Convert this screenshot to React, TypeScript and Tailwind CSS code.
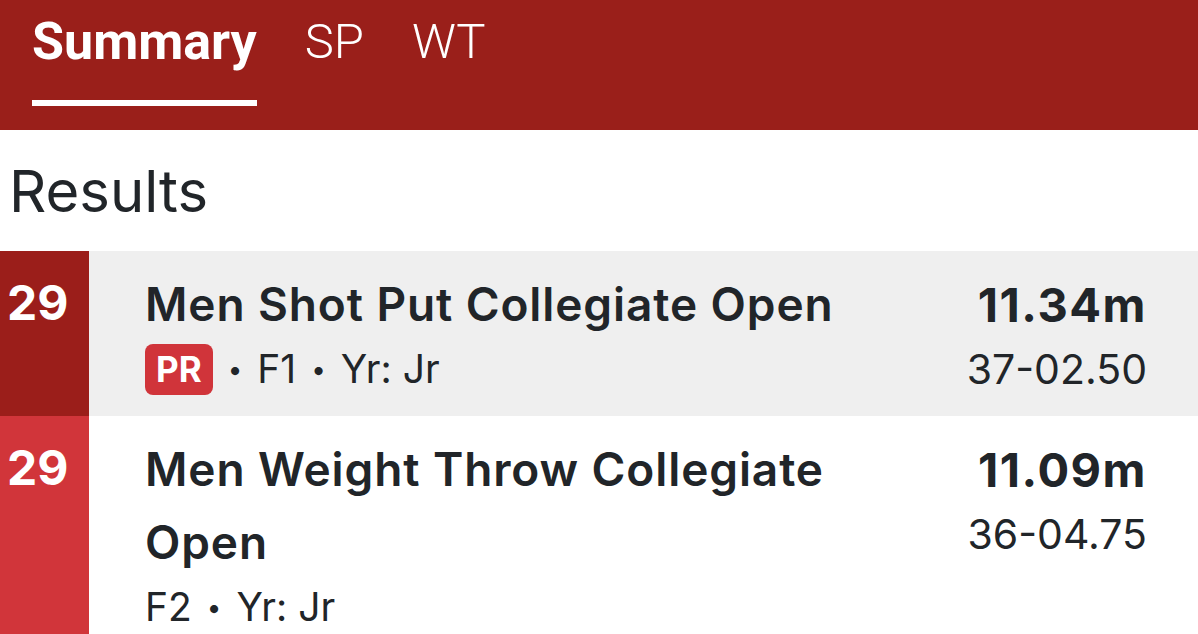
import React from 'react';

type Result = {
  place: number;
  event: string;
  pr?: boolean;
  flight: string;
  year: string;
  metric: string;
  imperial: string;
  rankBg: string;
  rowBg: string;
};

const results: Result[] = [
  {
    place: 29,
    event: 'Men Shot Put Collegiate Open',
    pr: true,
    flight: 'F1',
    year: 'Jr',
    metric: '11.34m',
    imperial: '37-02.50',
    rankBg: 'bg-[#9b1e1a]',
    rowBg: 'bg-[#efefef]',
  },
  {
    place: 29,
    event: 'Men Weight Throw Collegiate Open',
    flight: 'F2',
    year: 'Jr',
    metric: '11.09m',
    imperial: '36-04.75',
    rankBg: 'bg-[#d1353a]',
    rowBg: 'bg-white',
  },
];

const tabs = ['Summary', 'SP', 'WT'];

const Dot: React.FC = () => <span className="mx-[15px] text-[26px]">•</span>;

const App: React.FC = () => {
  return (
    <div className="h-[634px] w-[1198px] overflow-hidden bg-white font-['Inter',sans-serif] text-[#212529]">
      {/* 상단 탭 */}
      <div className="flex h-[130px] items-start gap-[48px] bg-[#9a1f1a] pl-[32px] font-['Roboto',sans-serif] text-white">
        {tabs.map((tab, i) => (
          <div key={tab} className="flex flex-col">
            <span
              className={`pt-[11px] leading-[62px] ${i === 0 ? 'text-[52px] font-bold' : 'text-[49px] font-light'}`}
            >
              {tab}
            </span>
            {i === 0 && <div className="mt-[27px] h-[6px] w-full bg-white" />}
          </div>
        ))}
      </div>

      <h2 className="px-[9px] pt-[26px] pb-[24px] text-[58px] leading-[71px] font-normal">Results</h2>

      {results.map((r, idx) => (
        <div key={idx} className={`flex ${r.rowBg} ${idx === results.length - 1 ? 'min-h-[300px]' : ''}`}>
          <div className={`w-[89px] shrink-0 ${r.rankBg} pt-[16px] pl-[7px] text-[48px] leading-[72px] font-bold text-white`}>
            {r.place}
          </div>
          <div className="flex flex-1 justify-between pt-[17px] pr-[51px] pb-[18px] pl-[56px]">
            <div className="max-w-[700px]">
              <div className="text-[46px] leading-[73px] font-semibold tracking-[0.9px]">{r.event}</div>
              <div className="flex h-[57px] items-center text-[39px] font-normal">
                {r.pr && (
                  <>
                    <span className="rounded-[8px] bg-[#d0343a] px-[11px] text-[35px] leading-[51px] font-bold text-white">
                      PR
                    </span>
                    <Dot />
                  </>
                )}
                <span>{r.flight}</span>
                <Dot />
                <span>Yr: {r.year}</span>
              </div>
            </div>
            <div className="flex flex-col items-end">
              <div className="text-[47px] leading-[73px] font-bold tracking-[1.5px]">{r.metric}</div>
              <div className="text-[41px] leading-[57px] font-normal">{r.imperial}</div>
            </div>
          </div>
        </div>
      ))}
    </div>
  );
};

export default App;
